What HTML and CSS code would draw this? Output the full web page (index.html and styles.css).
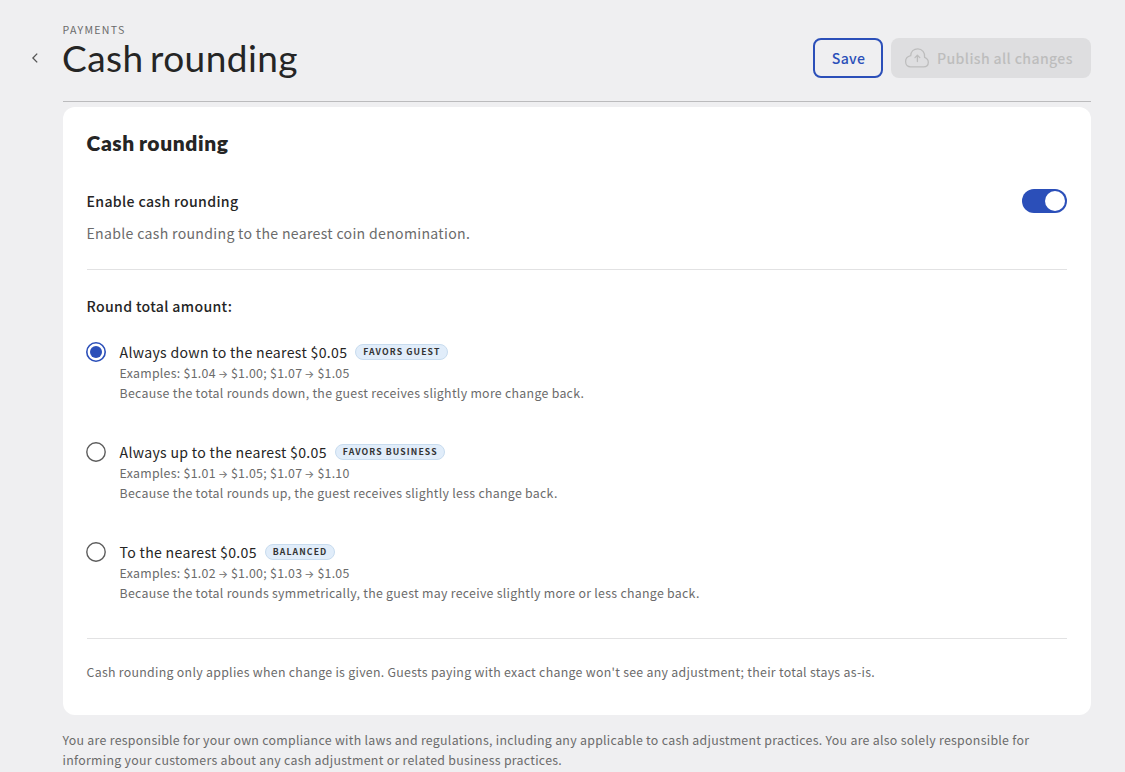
FILE: index.html
```html
<!DOCTYPE html>
<html lang="en">
<head>
<meta charset="utf-8">
<title>Cash rounding</title>
<link rel="stylesheet" href="styles.css">
</head>
<body>
<main class="page">
  <header class="header">
    <button class="back" aria-label="Back">
      <svg width="16" height="16" viewBox="0 0 16 16"><path d="M10.2 3.6 L5.9 8 L10.2 12.4" fill="none" stroke="currentColor" stroke-width="1.3"/></svg>
    </button>
    <div class="heading">
      <div class="eyebrow">PAYMENTS</div>
      <h1 class="title">Cash rounding</h1>
    </div>
    <div class="actions">
      <button class="btn btn-save"><span class="save-label">Save</span></button>
      <button class="btn btn-publish" disabled>
        <svg class="cloud" width="26" height="24" viewBox="0 0 26 24" fill="none" stroke="currentColor" stroke-width="1.3" stroke-linecap="round" stroke-linejoin="round"><path d="M6.7 20.9H19.4C22.3 20.9 24.3 19 24.3 16.3C24.3 14 22.8 12.2 20.6 11.4C21.4 6.6 18 2.8 13.8 2.8C9.7 2.8 6.9 5.7 6.7 9.7C3.6 10.4 1.6 12.6 1.6 15.6C1.6 18.8 3.8 20.9 6.7 20.9Z"/><path d="M13.4 15.6V9.4M11 11.6L13.4 9.2L15.8 11.6"/></svg>
        <span class="publish-label">Publish all changes</span>
      </button>
    </div>
  </header>

  <section class="card">
    <h2 class="card-title">Cash rounding</h2>
    <div class="setting">
      <div>
        <div class="label enable-label"><span>Enable cash rounding</span></div>
        <p class="description"><span>Enable cash rounding to the nearest coin denomination.</span></p>
      </div>
      <div class="toggle" role="switch" aria-checked="true"><div class="knob"></div></div>
    </div>
    <div class="group">
      <div class="label"><span>Round total amount:</span></div>
      <div class="options">
        <div class="option">
          <svg class="radio radio-on" viewBox="0 0 20 20"><circle cx="10" cy="10" r="9.2"/><circle class="dot" cx="10" cy="10" r="6"/></svg>
          <div>
            <div class="name"><span>Always down to the nearest $0.05</span><span class="badge">FAVORS GUEST</span></div>
            <div class="small"><span>Examples: $1.04 <span class="arrow">→</span> $1.00; $1.07 <span class="arrow">→</span> $1.05</span></div>
            <div class="small"><span>Because the total rounds down, the guest receives slightly more change back.</span></div>
          </div>
        </div>
        <div class="option">
          <svg class="radio" viewBox="0 0 20 20"><circle cx="10" cy="10" r="9.2"/></svg>
          <div>
            <div class="name"><span>Always up to the nearest $0.05</span><span class="badge">FAVORS BUSINESS</span></div>
            <div class="small"><span>Examples: $1.01 <span class="arrow">→</span> $1.05; $1.07 <span class="arrow">→</span> $1.10</span></div>
            <div class="small"><span>Because the total rounds up, the guest receives slightly less change back.</span></div>
          </div>
        </div>
        <div class="option">
          <svg class="radio" viewBox="0 0 20 20"><circle cx="10" cy="10" r="9.2"/></svg>
          <div>
            <div class="name"><span>To the nearest $0.05</span><span class="badge">BALANCED</span></div>
            <div class="small"><span>Examples: $1.02 <span class="arrow">→</span> $1.00; $1.03 <span class="arrow">→</span> $1.05</span></div>
            <div class="small"><span>Because the total rounds symmetrically, the guest may receive slightly more or less change back.</span></div>
          </div>
        </div>
      </div>
    </div>
    <p class="small note"><span>Cash rounding only applies when change is given. Guests paying with exact change won't see any adjustment; their total stays as-is.</span></p>
  </section>
  <p class="small legal">You are responsible for your own compliance with laws and regulations, including any applicable to cash adjustment practices. You are also solely responsible for<br>informing your customers about any cash adjustment or related business practices.</p>
</main>
</body>
</html>
```
FILE: styles.css
```css
* { box-sizing: border-box; }
body {
  margin: 0;
  height: 772px;
  overflow: hidden;
  background: #efeff1;
  color: #252525;
  font-family: "Noto Sans CJK JP", "Noto Sans", sans-serif;
  font-size: 14.1px;
  line-height: 24px;
  letter-spacing: 0.31px;
  white-space: nowrap;
}
h1, h2, p { margin: 0; }
button {
  font: inherit;
  letter-spacing: inherit;
  padding: 0;
  border: 0;
  background: none;
}
.page { padding: 0 34px 0 63px; }
.header {
  display: flex;
  height: 102px;
  border-bottom: 1px solid #bbbbbd;
}
.back {
  width: 16px;
  height: 16px;
  margin: 50px 20px 0 -36px;
  color: #555;
}
.back svg { display: block; }
.heading { flex: 1; padding-top: 22px; }
.eyebrow {
  margin-left: -0.5px;
  font-size: 10.6px;
  line-height: 16px;
  letter-spacing: 1.3px;
  color: #6b6b6b;
}
.title {
  margin: -2px 0 0 -1px;
  font: 400 37px/44px Lato, sans-serif;
  letter-spacing: 0.45px;
  word-spacing: -3.5px;
}
.actions { display: flex; gap: 8px; padding-top: 38px; }
.btn {
  display: flex;
  align-items: center;
  height: 40px;
  border-radius: 8px;
  font-weight: 500;
}
.btn-save {
  justify-content: center;
  width: 70px;
  padding-left: 1px;
  border: 2px solid #2b4fb9;
  color: #2b4fb9;
}
.btn-publish {
  width: 200px;
  padding-left: 13px;
  gap: 7px;
  background: #dedee0;
  color: #bdbdbd;
  letter-spacing: 0.36px;
}
.card {
  height: 608px;
  margin-top: 5px;
  padding: 23px 24px 0;
  border-radius: 12px;
  background: #fff;
}
.card-title {
  margin-left: -0.5px;
  font: 800 21px/26px Lato, sans-serif;
  letter-spacing: 0.62px;
  word-spacing: -1.5px;
}
.setting {
  display: flex;
  justify-content: space-between;
  height: 114px;
  padding-top: 33px;
  border-bottom: 1px solid #e2e2e3;
}
.label { margin-left: -0.5px; font-weight: 500; letter-spacing: 0.34px; }
.description { margin: 8px 0 0 -0.5px; color: #6b6b6b; }
.toggle {
  display: flex;
  justify-content: flex-end;
  width: 45px;
  height: 24px;
  padding: 2px;
  border-radius: 12px;
  background: #2b4fb9;
}
.knob { width: 20px; height: 20px; border-radius: 50%; background: #fff; }
.group { height: 369px; padding-top: 24px; border-bottom: 1px solid #e2e2e3; }
.options { display: grid; grid-auto-rows: 100px; margin-top: 22px; }
.option { display: flex; gap: 13.5px; }
.radio {
  width: 20px;
  height: 20px;
  margin: 2px 0 0 -1px;
  fill: none;
  stroke: #5c5c5c;
  stroke-width: 1.4;
}
.radio-on { stroke: #2b4fb9; stroke-width: 1.6; }
.dot { fill: #2b4fb9; stroke: none; }
.name { display: flex; align-items: center; gap: 8px; height: 23px; }
.badge {
  height: 16px;
  padding: 0 6.5px 0 7px;
  border: 1px solid #c8dcef;
  border-radius: 8px;
  background: #e1edfa;
  font-size: 8.7px;
  font-weight: 700;
  line-height: 14px;
  letter-spacing: 1.1px;
  color: #333;
}
.small {
  font-size: 12.35px;
  line-height: 20px;
  letter-spacing: 0.287px;
  color: #6b6b6b;
}
.arrow {
  display: inline-block;
  width: 9px;
  font-family: Inter, sans-serif;
  font-size: 10.5px;
  line-height: 1;
  letter-spacing: 0;
  text-indent: -1px;
}
.note { margin-left: -0.5px; padding-top: 23px; }
.legal { margin: 15px 0 0 -0.5px; }
```
